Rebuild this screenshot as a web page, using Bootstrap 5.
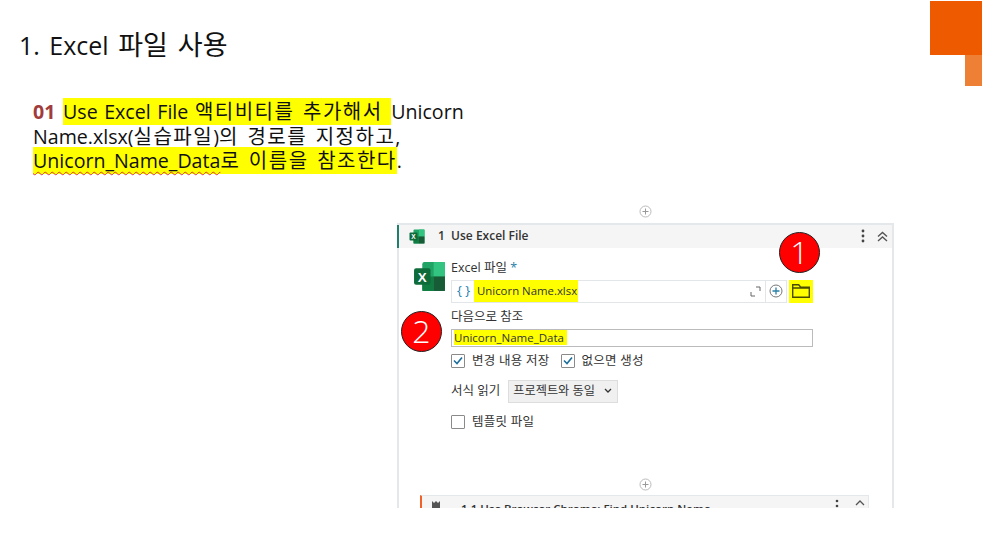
<!DOCTYPE html>
<html lang="ko">
  <head>
    <meta charset="UTF-8" />
    <title>Excel 파일 사용</title>
    <link rel="stylesheet" href="https://cdn.jsdelivr.net/npm/bootstrap@5.3.0/dist/css/bootstrap.min.css" />
    <style>
      body {
        background: #fff;
        font-family: "Open Sans", "Noto Sans CJK KR", sans-serif;
        color: #111;
        overflow: hidden;
      }
      .slide { position: relative; width: 982px; height: 544px; overflow: hidden; padding: 27px 0 0 20px; }
      .deco-a { position: absolute; left: 930px; top: 1px; width: 52px; height: 54px; background: #ee5a00; }
      .deco-b { position: absolute; left: 965px; top: 55px; width: 17px; height: 31px; background: #ee8035; }
      .slide-title { font-size: 25px; line-height: 36px; font-weight: 400; margin: 0; color: #111; word-spacing: 3px; margin-left: -1px; }
      .slide-title .ko-t { font-size: 27px; }
      .lesson { margin: 37px 0 0 13px; width: 450px; font-size: 19.6px; line-height: 24.5px; word-spacing: 1.5px; }
      .lesson b { color: #a13c3c; margin-right: 1px; }
      .ko { font-family: "Noto Sans CJK KR", sans-serif; font-size: 20px; letter-spacing: 1.5px; line-height: 20px; }
      .hl { background: #ff0; }
      .wavy { text-decoration: underline wavy #d33; text-decoration-thickness: 1px; text-underline-offset: 3px; }
      .add-dot { width: 13px; height: 13px; display: block; }
      .top-add { margin: 31px 0 5px 619px; width: 13px; }
      .act-panel { position: relative; margin-left: 377px; width: 497px; height: 285px; overflow: hidden; border: 2px solid #e4e8ea; border-bottom: 0; border-left: 0; font-size: 12.5px; color: #333; }
      .act-head { height: 23px; background: #f5f5f5; padding: 0 4px 0 10px; font-weight: 600; font-size: 12px; border-left: 2px solid #1f7f6a; }
      .act-head .name { margin-left: 13px; }
      .act-body { height: 262px; padding: 12px 0 0 52px; position: relative; border-left: 2px solid #e4e8ea; }
      .xl-big { position: absolute; left: 14px; top: 13px; }
      .lbl { line-height: 16px; height: 16px; }
      .lbl.ref-lbl { margin-top: 6px; }
      .req { color: #2a7fa8; }
      .path-row { margin-top: 4px; height: 23px; }
      .path-box { width: 315px; height: 23px; border: 1px solid #e2e6e9; padding: 0 4px 0 5px; }
      .brace { color: #1d7fb0; font-size: 13px; width: 17px; }
      .file-hl { background: #ff0; font-size: 11.4px; padding: 2px 1px 2px 3px; }
      .sq-btn { width: 21px; height: 23px; border: 1px solid #e2e6e9; border-left: 0; }
      .folder-wrap { width: 24px; height: 23px; margin-left: 2px; background: #ff0; }
      .ref-input { width: 362px; height: 18px; border: 1px solid #bbb; padding: 0 2px; margin-top: 4px; line-height: 16px; font-size: 11.5px; color: #333; background: #fff; }
      .tick { width: 14px; height: 14px; margin: 0; border: 1px solid #8a8a8a; border-radius: 1px; display: flex; align-items: center; justify-content: center; flex: none; }
      .opt-row { margin-top: 7px; height: 14px; line-height: 14px; }
      .opt-row .txt { margin-left: 7px; letter-spacing: .25px; }
      .tick.next { margin-left: 11px; }
      .fmt-row { margin-top: 12px; height: 23px; }
      .fmt-sel { margin-left: 8px; width: 110px; height: 23px; background: #f0f0f0; border: 1px solid #ddd; padding: 0 5px 0 4px; justify-content: space-between; font-size: 12.2px; }
      .tpl-row { margin-top: 12px; height: 15px; }
      .bottom-add { position: absolute; left: 240px; top: 230px; }
      .sub-act { position: absolute; left: 23px; top: 270px; width: 449px; height: 20px; background: #f5f5f5; border: 1px solid #e4e8ea; border-left: 2px solid #f0622a; font-size: 11.5px; font-weight: 600; padding: 5px 0 0 39px; line-height: 15px; white-space: nowrap; }
      .sub-icon { position: absolute; left: 8px; top: 4px; }
      .sub-tools { position: absolute; right: 3px; top: 3px; }
      .num-dot { position: absolute; width: 41px; height: 41px; border-radius: 50%; background: #f00; border: 1px solid #222; color: #fff; font-size: 32px; font-weight: 300; display: flex; align-items: center; justify-content: center; line-height: 1; }
      .dot-one { left: 382px; top: 7px; }
      .dot-two { left: 4px; top: 86px; }
    </style>
  </head>
  <body>
    <div class="slide">
      <div class="deco-a"></div>
      <div class="deco-b"></div>
      <h1 class="slide-title">1. Excel <span class="ko-t">파일 사용</span></h1>
      <p class="lesson"><b>01</b> <span class="hl">Use Excel File <span class="ko">액티비티를 추가해서 </span></span>Unicorn<br />Name.xlsx(<span class="ko">실습파일</span>)<span class="ko">의 경로를 지정하고</span>,<br /><span class="hl"><span class="wavy">Unicorn_Name_Data</span><span class="ko">로 이름을 참조한다</span></span>.</p>

      <div class="top-add">
        <svg class="add-dot" viewBox="0 0 13 13"><circle cx="6.5" cy="6.5" r="5.5" fill="none" stroke="#bbb" /><path d="M3.5 6.5h6M6.5 3.5v6" stroke="#999" /></svg>
      </div>

      <div class="act-panel">
        <div class="act-head d-flex align-items-center">
          <svg width="16" height="15" viewBox="0 0 32 30"><rect x="9" y="1" width="22" height="28" rx="2" fill="#21a366" /><rect x="20" y="1" width="11" height="14" fill="#33c481" /><rect x="9" y="15" width="11" height="14" fill="#107c41" /><rect x="20" y="15" width="11" height="14" fill="#185c37" /><rect x="1" y="7" width="16" height="16" rx="2" fill="#0e6b3a" /><text x="9" y="20" font-size="13" font-weight="700" fill="#fff" text-anchor="middle" font-family="Liberation Sans">X</text></svg>
          <span class="name">1&nbsp; Use Excel File</span>
          <svg class="ms-auto me-2" width="4" height="14" viewBox="0 0 4 14"><circle cx="2" cy="2" r="1.4" fill="#444" /><circle cx="2" cy="7" r="1.4" fill="#444" /><circle cx="2" cy="12" r="1.4" fill="#444" /></svg>
          <svg class="ms-1" width="11" height="11" viewBox="0 0 11 11"><path d="M1 5.5l4.5-4 4.5 4M1 10l4.5-4 4.5 4" fill="none" stroke="#555" stroke-width="1.4" /></svg>
        </div>
        <div class="act-body">
          <svg class="xl-big" width="33" height="31" viewBox="0 0 32 30"><rect x="9" y="1" width="22" height="28" rx="2" fill="#21a366" /><rect x="20" y="1" width="11" height="14" fill="#33c481" /><rect x="9" y="15" width="11" height="14" fill="#107c41" /><rect x="20" y="15" width="11" height="14" fill="#185c37" /><rect x="1" y="7" width="16" height="16" rx="2" fill="#0e6b3a" /><text x="9" y="20" font-size="13" font-weight="700" fill="#fff" text-anchor="middle" font-family="Liberation Sans">X</text></svg>
          <div class="lbl">Excel 파일 <span class="req">*</span></div>
          <div class="path-row d-flex">
            <div class="path-box d-flex align-items-center">
              <span class="brace">{ }</span>
              <span class="file-hl">Unicorn Name.xlsx</span>
              <svg class="ms-auto" width="11" height="11" viewBox="0 0 11 11"><path d="M1 6v4h4M6 1h4v4" fill="none" stroke="#666" /></svg>
            </div>
            <div class="sq-btn d-flex align-items-center justify-content-center">
              <svg width="14" height="14" viewBox="0 0 14 14"><circle cx="7" cy="7" r="6" fill="none" stroke="#777" /><path d="M3.5 7h7M7 3.5v7" stroke="#2a7fa8" stroke-width="1.3" /></svg>
            </div>
            <div class="folder-wrap d-flex align-items-center justify-content-center">
              <svg width="18" height="14" viewBox="0 0 18 14"><path d="M.7 13.3V.7h6l2 2.5h8.6v10.1zM.7 4h16.6" fill="none" stroke="#4a4a00" stroke-width="1.4" /></svg>
            </div>
          </div>
          <div class="lbl ref-lbl">다음으로 참조</div>
          <div class="ref-input"><span class="hl">Unicorn_Name_Data&nbsp;</span></div>
          <div class="opt-row d-flex align-items-center">
            <span class="tick"><svg width="10" height="9" viewBox="0 0 10 9"><path d="M1 4.5l3 3 5-6" fill="none" stroke="#1d6f9c" stroke-width="1.6" /></svg></span>
            <span class="txt">변경 내용 저장</span>
            <span class="tick next"><svg width="10" height="9" viewBox="0 0 10 9"><path d="M1 4.5l3 3 5-6" fill="none" stroke="#1d6f9c" stroke-width="1.6" /></svg></span>
            <span class="txt">없으면 생성</span>
          </div>
          <div class="fmt-row d-flex align-items-center">
            <span>서식 읽기</span>
            <div class="fmt-sel d-flex align-items-center">
              <span>프로젝트와 동일</span>
              <svg width="8" height="6" viewBox="0 0 8 6"><path d="M1 1l3 3 3-3" fill="none" stroke="#333" stroke-width="1.3" /></svg>
            </div>
          </div>
          <div class="tpl-row opt-row d-flex align-items-center">
            <span class="tick"></span>
            <span class="txt">템플릿 파일</span>
          </div>
          <svg class="add-dot bottom-add" viewBox="0 0 13 13"><circle cx="6.5" cy="6.5" r="5.5" fill="none" stroke="#bbb" /><path d="M3.5 6.5h6M6.5 3.5v6" stroke="#999" /></svg>
        </div>
        <div class="sub-act">
          <svg class="sub-icon" width="12" height="14" viewBox="0 0 12 14"><path d="M2 1l2 2 2-2 2 2 2-2v11H2z" fill="#555" /></svg>
          1.1 Use Browser Chrome: Find Unicorn Name
          <div class="sub-tools d-flex align-items-start gap-2">
            <svg width="4" height="14" viewBox="0 0 4 14"><circle cx="2" cy="2" r="1.3" fill="#444" /><circle cx="2" cy="7" r="1.3" fill="#444" /><circle cx="2" cy="12" r="1.3" fill="#444" /></svg>
            <svg class="ms-2" width="10" height="10" viewBox="0 0 10 10"><path d="M1 6l4-4 4 4" fill="none" stroke="#555" stroke-width="1.3" /></svg>
          </div>
        </div>
        <div class="num-dot dot-one">1</div>
        <div class="num-dot dot-two">2</div>
      </div>
    </div>
    <script src="https://cdn.jsdelivr.net/npm/bootstrap@5.3.0/dist/js/bootstrap.bundle.min.js"></script>
  </body>
</html>
